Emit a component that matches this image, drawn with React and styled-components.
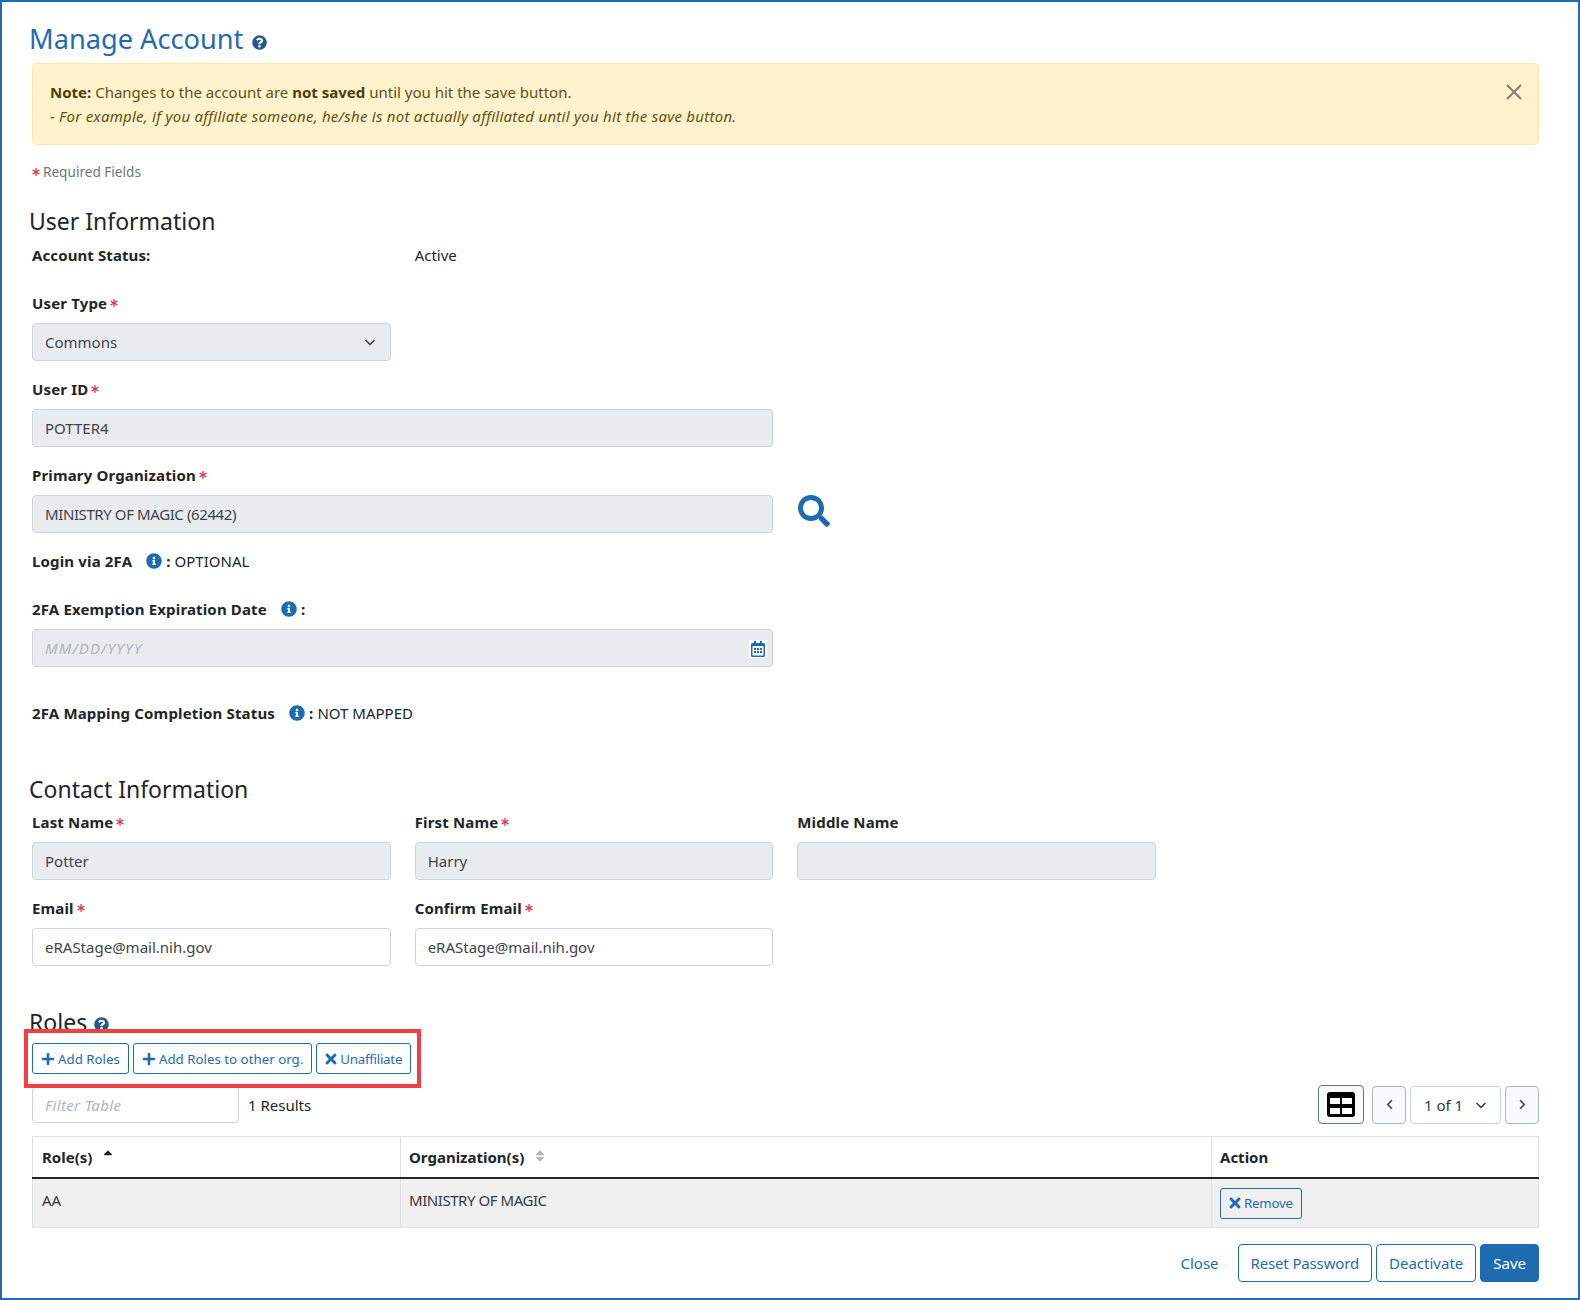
import React from 'react';
import styled, { createGlobalStyle } from 'styled-components';
import {
  FaAsterisk,
  FaChevronLeft,
  FaChevronRight,
  FaInfoCircle,
  FaPlus,
  FaQuestionCircle,
  FaRegCalendarAlt,
  FaSearch,
  FaSort,
  FaSortUp,
  FaTimes
} from 'react-icons/fa';

const blue = '#1f6bb0';

const GlobalStyle = createGlobalStyle`
  * { box-sizing: border-box; }
  body {
    margin: 0;
    background: #fff;
    color: #212529;
    font-family: "Noto Sans", "Open Sans", sans-serif;
    font-size: 15px;
    line-height: 24px;
  }
`;

const Page = styled.div`
  width: 1580px;
  height: 1300px;
  border: 2px solid ${blue};
  padding: 0 39px 0 30px;
  overflow: hidden;
`;

const Title = styled.h1`
  margin: 19px 0 6px -3px;
  font-size: 27.2px;
  line-height: 36px;
  font-weight: 400;
  color: ${blue};
  display: flex;
  align-items: center;
  gap: 9px;
`;

const HelpIcon = styled(FaQuestionCircle)`
  color: #215a8f;
  font-size: 15px;
  margin-top: ${p => p.$top}px;
`;

const Alert = styled.div`
  position: relative;
  height: 82px;
  padding: 16px 17px;
  background: #fff2cc;
  border: 1px solid #ffe9a8;
  border-radius: 4px;
  color: #655013;
  b { color: #4f3d08; }
  i { display: block; letter-spacing: 0.26px; }
`;

const CloseX = styled.svg`
  position: absolute;
  top: 19px;
  right: 15px;
  width: 18px;
  height: 18px;
  stroke: #837c68;
  stroke-width: 2;
`;

const Required = styled.div`
  margin-top: 15px;
  font-size: 13.6px;
  line-height: 24px;
  color: #6c757d;
  display: flex;
  align-items: center;
  gap: 3px;
`;

const Star = styled(FaAsterisk)`
  color: #dc3545;
  font-size: 8px;
`;

const SectionTitle = styled.h2`
  margin: ${p => p.$top}px 0 0 -3px;
  font-size: 23px;
  line-height: 32px;
  font-weight: 400;
  color: #212529;
  display: flex;
  align-items: center;
  gap: 7px;
`;

const Grid = styled.div`
  display: grid;
  width: 1124px;
  grid-template-columns: repeat(3, 1fr);
  column-gap: 24px;
  margin-top: ${p => p.$top || 0}px;
`;

const Field = styled.div`
  grid-column: span ${p => p.$span || 1};
  display: flex;
  flex-direction: column;
  position: relative;
`;

const Label = styled.label`
  font-weight: 700;
  letter-spacing: 0.15px;
  line-height: 22px;
  margin-bottom: 9px;
  display: flex;
  align-items: center;
  gap: 3px;
`;

const Input = styled.div`
  position: relative;
  height: 38px;
  padding: 0 12px;
  display: flex;
  align-items: center;
  justify-content: space-between;
  border: 1px solid #ced4da;
  border-radius: 4px;
  color: ${p => (p.$placeholder ? '#adb5bd' : '#3d4349')};
  font-style: ${p => (p.$placeholder ? 'italic' : 'normal')};
  letter-spacing: ${p => (p.$placeholder ? '1.1px' : p.$tight ? '-0.4px' : '0')};
  background: ${p => (p.$plain ? '#fff' : '#e9ecef')};
`;

const SearchButton = styled(FaSearch)`
  position: absolute;
  left: 766px;
  top: 31px;
  font-size: 32px;
  color: ${blue};
`;

const CalendarIcon = styled.span`
  position: absolute;
  right: 5px;
  top: 10px;
  width: 18px;
  height: 18px;
  background: #fff;
  color: ${blue};
  font-size: 16px;
  display: flex;
  align-items: center;
  justify-content: center;
`;

const InlineRow = styled.div`
  margin-top: ${p => p.$top}px;
  display: flex;
  align-items: center;
  b { font-weight: 700; letter-spacing: 0.15px; }
`;

const InfoIcon = styled(FaInfoCircle)`
  color: ${blue};
  font-size: 16px;
  margin: 0 ${p => p.$right}px 0 ${p => p.$left}px;
`;

const StatusRow = styled(Grid)`
  margin-top: 6px;
  margin-bottom: 25px;
  b { font-weight: 700; letter-spacing: 0.1px; }
`;

const ActionBar = styled.div`
  position: relative;
  width: fit-content;
  margin-top: 5px;
  display: flex;
  gap: 4px;
`;

const Highlight = styled.div`
  position: absolute;
  inset: -14px -10px -14px -8px;
  border: 4px solid #f04046;
  pointer-events: none;
`;

const SmallButton = styled.button`
  height: 31px;
  padding: 0 8px;
  display: inline-flex;
  align-items: center;
  gap: 3px;
  font: inherit;
  font-size: 13.3px;
  letter-spacing: ${p => (p.$tight ? '-0.25px' : '0')};
  color: ${blue};
  background: transparent;
  border: 1px solid ${blue};
  border-radius: 3px;
`;

const PlusIcon = styled(FaPlus)`
  font-size: 14px;
`;

const TimesIcon = styled(FaTimes)`
  font-size: 16px;
  margin: 0 -2px;
`;

const TableTools = styled.div`
  margin-top: 11px;
  display: flex;
  align-items: center;
  justify-content: space-between;
`;

const FilterGroup = styled.div`
  display: flex;
  align-items: center;
  gap: 9px;
`;

const FilterInput = styled.div`
  width: 207px;
  height: 37px;
  padding: 0 12px;
  display: flex;
  align-items: center;
  border: 1px solid #ced4da;
  border-radius: 4px;
  color: #adb5bd;
  font-style: italic;
  letter-spacing: 0.35px;
`;

const Pager = styled.div`
  display: flex;
  align-items: center;
  gap: 4px;
`;

const ToggleButton = styled.button`
  width: 46px;
  height: 39px;
  margin-right: 4px;
  padding: 0;
  display: flex;
  align-items: center;
  justify-content: center;
  background: #f8f9fa;
  border: 1px solid #6c757d;
  border-radius: 4px;
`;

const PageButton = styled.button`
  width: 34px;
  height: 38px;
  padding: 0;
  display: flex;
  align-items: center;
  justify-content: center;
  color: #495057;
  font-size: 11px;
  background: #f8f9fa;
  border: 1px solid #adb5bd;
  border-radius: 4px;
`;

const PageSelect = styled.div`
  width: 91px;
  height: 38px;
  padding: 0 13px;
  display: flex;
  align-items: center;
  justify-content: space-between;
  border: 1px solid #ced4da;
  border-radius: 4px;
  color: #343a40;
`;

const Table = styled.table`
  width: 100%;
  margin-top: 12px;
  table-layout: fixed;
  border-collapse: collapse;
`;

const HeadCell = styled.th`
  width: ${p => p.$width};
  height: 41px;
  padding: 0 8px;
  text-align: left;
  font-weight: 700;
  background: #fff;
  border: 1px solid #dee2e6;
  border-bottom: 2px solid #212529;
  &:first-child { padding-left: 9px; }
`;

const SortUp = styled(FaSortUp)`
  margin-left: 5px;
  font-size: 14px;
  color: #212529;
`;

const SortBoth = styled(FaSort)`
  margin-left: 5px;
  font-size: 14px;
  color: #adb5bd;
`;

const Cell = styled.td`
  padding: 9px 8px 8px;
  vertical-align: top;
  background: #f0f0f0;
  color: #343a40;
  border: 1px solid #dee2e6;
  &:first-child { padding-left: 9px; }
`;

const TightText = styled.span`
  letter-spacing: -0.45px;
`;

const Footer = styled.div`
  margin-top: 16px;
  display: flex;
  justify-content: flex-end;
  align-items: center;
  gap: 4px;
`;

const FooterButton = styled.button`
  height: 38px;
  padding: 0 12px;
  font: inherit;
  letter-spacing: ${p => p.$spacing || 0}px;
  margin-right: ${p => p.$after || 0}px;
  color: ${p => (p.$primary ? '#fff' : blue)};
  background: ${p => (p.$primary ? blue : 'transparent')};
  border: 1px solid ${p => (p.$link ? 'transparent' : blue)};
  border-radius: 4px;
`;

const ChevronSvg = styled.svg`
  width: 12px;
  height: 12px;
  fill: none;
  stroke: #343a40;
  stroke-width: 1.5;
  margin-right: ${p => p.$right || 0}px;
`;

const Chevron = ({ right }) => (
  <ChevronSvg viewBox="0 0 12 12" $right={right}>
    <path d="M1.5 4l4.5 4.5L10.5 4" />
  </ChevronSvg>
);

const TableGlyph = () => (
  <svg width="28" height="25" viewBox="0 0 28 25">
    <rect width="28" height="25" rx="3" fill="#000" />
    <rect x="3" y="6" width="10" height="6" fill="#fff" />
    <rect x="15" y="6" width="10" height="6" fill="#fff" />
    <rect x="3" y="16" width="10" height="6" fill="#fff" />
    <rect x="15" y="16" width="10" height="6" fill="#fff" />
  </svg>
);

const App = () => (
  <Page>
    <GlobalStyle />
    <Title>
      Manage Account <HelpIcon $top={6} />
    </Title>
    <Alert>
      <b>Note:</b> Changes to the account are <b>not saved</b> until you hit the save button.
      <i>- For example, if you affiliate someone, he/she is not actually affiliated until you hit the save button.</i>
      <CloseX viewBox="0 0 18 18">
        <path d="M2 2l14 14M16 2L2 16" />
      </CloseX>
    </Alert>
    <Required>
      <Star /> Required Fields
    </Required>

    <SectionTitle $top={21}>User Information</SectionTitle>
    <StatusRow>
      <b>Account Status:</b>
      <span>Active</span>
    </StatusRow>
    <Grid>
      <Field>
        <Label>User Type <Star /></Label>
        <Input>Commons <Chevron right={2} /></Input>
      </Field>
    </Grid>
    <Grid $top={17}>
      <Field $span={2}>
        <Label>User ID <Star /></Label>
        <Input>POTTER4</Input>
      </Field>
    </Grid>
    <Grid $top={17}>
      <Field $span={2}>
        <Label>Primary Organization <Star /></Label>
        <Input $tight>MINISTRY OF MAGIC (62442)</Input>
        <SearchButton />
      </Field>
    </Grid>
    <InlineRow $top={16}>
      <b>Login via 2FA</b>
      <InfoIcon $left={14} $right={4} />
      <b>:&nbsp;</b>OPTIONAL
    </InlineRow>
    <Grid $top={25}>
      <Field $span={2}>
        <Label>
          2FA Exemption Expiration Date
          <InfoIcon $left={11} $right={1} />
          :
        </Label>
        <Input $placeholder>
          MM/DD/YYYY
          <CalendarIcon><FaRegCalendarAlt /></CalendarIcon>
        </Input>
      </Field>
    </Grid>
    <InlineRow $top={34}>
      <b>2FA Mapping Completion Status</b>
      <InfoIcon $left={14} $right={4} />
      <b>:&nbsp;</b>NOT MAPPED
    </InlineRow>

    <SectionTitle $top={48}>Contact Information</SectionTitle>
    <Grid $top={6}>
      <Field>
        <Label>Last Name <Star /></Label>
        <Input>Potter</Input>
      </Field>
      <Field>
        <Label>First Name <Star /></Label>
        <Input>Harry</Input>
      </Field>
      <Field>
        <Label>Middle Name</Label>
        <Input />
      </Field>
    </Grid>
    <Grid $top={17}>
      <Field>
        <Label>Email <Star /></Label>
        <Input $plain>eRAStage@mail.nih.gov</Input>
      </Field>
      <Field>
        <Label>Confirm Email <Star /></Label>
        <Input $plain>eRAStage@mail.nih.gov</Input>
      </Field>
    </Grid>

    <SectionTitle $top={40}>
      Roles <HelpIcon $top={4} />
    </SectionTitle>
    <ActionBar>
      <SmallButton><PlusIcon /> Add Roles</SmallButton>
      <SmallButton><PlusIcon /> Add Roles to other org.</SmallButton>
      <SmallButton $tight><TimesIcon /> Unaffiliate</SmallButton>
      <Highlight />
    </ActionBar>
    <TableTools>
      <FilterGroup>
        <FilterInput>Filter Table</FilterInput>
        <span>1 Results</span>
      </FilterGroup>
      <Pager>
        <ToggleButton><TableGlyph /></ToggleButton>
        <PageButton><FaChevronLeft /></PageButton>
        <PageSelect>1 of 1 <Chevron /></PageSelect>
        <PageButton><FaChevronRight /></PageButton>
      </Pager>
    </TableTools>
    <Table>
      <thead>
        <tr>
          <HeadCell $width="368px">Role(s) <SortUp /></HeadCell>
          <HeadCell $width="811px">Organization(s) <SortBoth /></HeadCell>
          <HeadCell>Action</HeadCell>
        </tr>
      </thead>
      <tbody>
        <tr>
          <Cell>AA</Cell>
          <Cell><TightText>MINISTRY OF MAGIC</TightText></Cell>
          <Cell>
            <SmallButton $tight><TimesIcon /> Remove</SmallButton>
          </Cell>
        </tr>
      </tbody>
    </Table>
    <Footer>
      <FooterButton $link $after={2}>Close</FooterButton>
      <FooterButton $spacing={-0.15}>Reset Password</FooterButton>
      <FooterButton>Deactivate</FooterButton>
      <FooterButton $primary>Save</FooterButton>
    </Footer>
  </Page>
);

export default App;
